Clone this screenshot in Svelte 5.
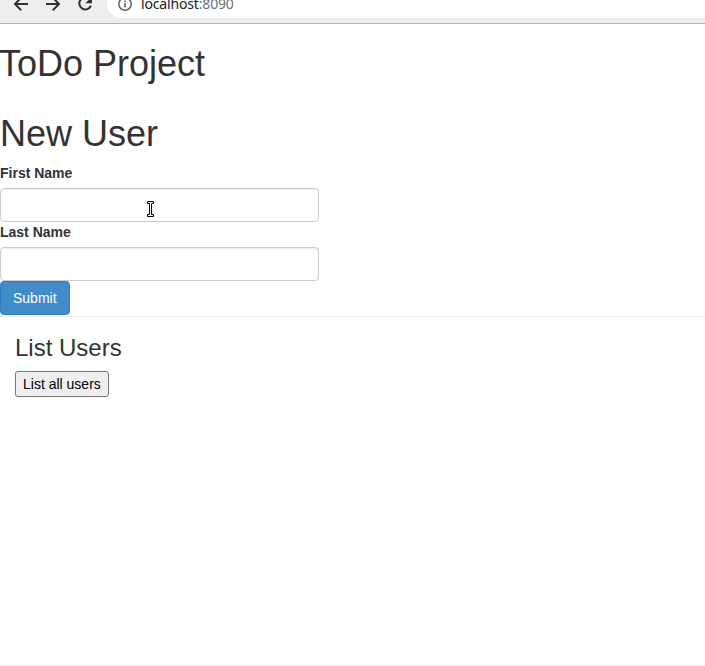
<script>
  let firstName = $state('');
  let lastName = $state('');
</script>

<div class="window">
  <header class="toolbar">
    <nav class="nav">
      <svg width="16" height="22" viewBox="0 0 16 22"><path d="M15 11H2M8.2 4.6L2 11l6.2 6.4" /></svg>
      <svg width="16" height="22" viewBox="0 0 16 22"><path d="M1 11h13M7.8 4.6L14 11l-6.2 6.4" /></svg>
      <svg width="16" height="22" viewBox="0 0 16 22"><path d="M12.9 6.6A6 6 0 1 0 13.9 12.6" /><path class="solid" d="M15 3.6v6.6H8.4z" /></svg>
    </nav>
    <div class="address">
      <svg class="info" width="14" height="14" viewBox="0 0 14 14"><circle cx="7" cy="7" r="6.2" /><path d="M7 6.1v4.4M7 3.4v1.6" /></svg>
      <span class="url">localhost<span class="port">:8090</span></span>
    </div>
  </header>

  <main>
    <section class="title"><h1>ToDo Project</h1></section>
    <section class="form">
      <h1>New User</h1>
      <form onsubmit={(e) => e.preventDefault()}>
        <label for="first">First Name</label>
        <div class="field">
          <input id="first" bind:value={firstName} />
          <svg class="ibeam" width="8" height="16" viewBox="0 0 8 16">
            <path d="M.5 .5h6v2h-2v11h2v2h-6v-2h2v-11h-2z" />
          </svg>
        </div>
        <label for="last">Last Name</label>
        <div class="field"><input id="last" bind:value={lastName} /></div>
        <button class="submit" type="submit">Submit</button>
      </form>
    </section>
    <section class="list">
      <h3>List Users</h3>
      <button class="plain" type="button">List all users</button>
    </section>
  </main>
</div>

<style>
  :global(body) { margin: 0; background: #fff; }
  .window {
    box-sizing: border-box;
    height: 666px;
    overflow: hidden;
    display: flex;
    flex-direction: column;
    font: 14px/20px "Liberation Sans", Arial, sans-serif;
    color: #333;
  }
  .window * { box-sizing: border-box; }
  .toolbar {
    flex: none;
    height: 24px;
    display: flex;
    align-items: flex-start;
    background: #eeeeee;
    border-bottom: 1px solid #b6b6b6;
  }
  .nav { display: flex; gap: 16px; width: 107px; padding-left: 13px; margin-top: -7px; }
  .nav svg { flex: none; }
  path { fill: none; stroke: #2f3033; stroke-width: 2; }
  .solid { fill: #2f3033; stroke: none; }
  .address {
    flex: 1;
    display: flex;
    align-items: center;
    height: 28px;
    margin-top: -10px;
    padding-left: 11px;
    background: #fff;
    border-radius: 14px 0 0 14px;
  }
  .info circle { fill: none; stroke: #5f6368; stroke-width: 1.5; }
  .info path { stroke: #5f6368; stroke-width: 1.6; }
  .url { margin-left: 9px; font: 14px/20px "Noto Sans", sans-serif; letter-spacing: -0.16px; color: #202124; }
  .port { color: #6b6f74; }
  main { flex: 1; display: flex; flex-direction: column; }
  h1, h3 { font-weight: 500; line-height: 1.1; margin: 20px 0 10px; }
  h1 { font-size: 36px; }
  h3 { font-size: 24px; margin: 18px 0 9px; }
  .title, .form { display: flow-root; }
  .title h1 { margin-left: -1px; }
  label { display: block; margin-bottom: 5px; font-weight: 700; }
  .field { position: relative; width: 319px; height: 34px; }
  input {
    display: block;
    width: 100%;
    height: 34px;
    padding: 6px 12px;
    border: 1px solid #ccc;
    border-radius: 4px;
    box-shadow: inset 0 1px 1px rgba(0, 0, 0, 0.075);
    outline: 0;
  }
  .ibeam { position: absolute; left: 147px; top: 13px; }
  .ibeam path { fill: #fff; stroke: #000; stroke-width: 1; }
  .submit {
    display: block;
    height: 34px;
    padding: 6px 12px;
    font: inherit;
    color: #fff;
    background: #428bca;
    border: 1px solid #357ebd;
    border-radius: 4px;
  }
  .list {
    flex: 1;
    margin-top: 1px;
    padding: 0 15px;
    border: solid #f1f1f1;
    border-width: 1px 0;
  }
  .plain {
    display: block;
    height: 26px;
    padding: 2px 7px;
    font: inherit;
    color: #000;
    background: #efefef;
    border: 1px solid #767676;
    border-radius: 3px;
  }
</style>
